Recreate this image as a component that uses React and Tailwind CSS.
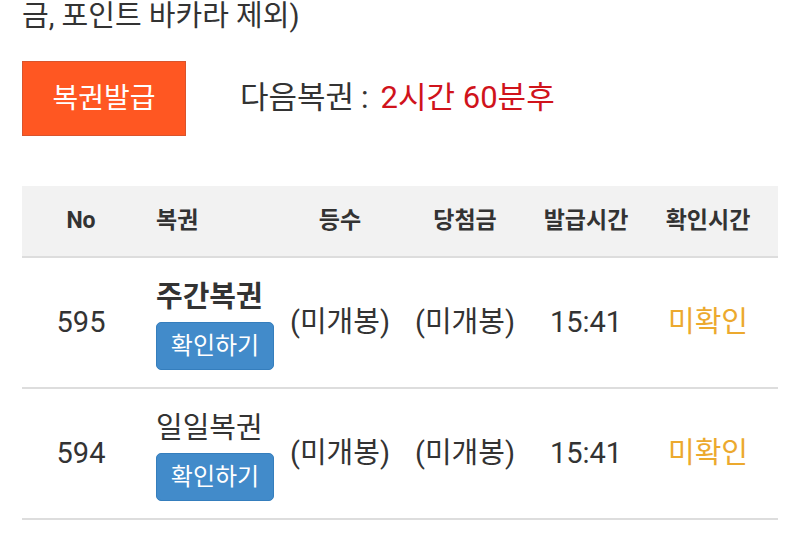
export default function App() {
  const rows = [
    { no: 595, name: "주간복권", bold: true },
    { no: 594, name: "일일복권", bold: false },
  ];

  return (
    <div
      className="bg-white w-[800px] h-[543px] overflow-hidden px-[22px] text-[#333]"
      style={{ fontFamily: 'Roboto, "Noto Sans CJK KR", "Noto Sans", sans-serif' }}
    >
      {/* Notice tail */}
      <div className="text-[29px] leading-[33px]">금, 포인트 바카라 제외)</div>

      {/* Issue row */}
      <div className="flex items-center mt-[28px]">
        <button className="w-[164px] h-[75px] bg-[#ff5722] border border-[#d9542c] text-white text-[28px] flex items-center justify-center">
          복권발급
        </button>
        <div className="ml-[54px] text-[31px] flex items-center">
          <span>다음복권</span>
          <span className="ml-[7px] mr-[12px]">:</span>
          <span className="text-[#d0131b]">2시간 60분후</span>
        </div>
      </div>

      {/* Ticket table */}
      <div className="mt-[50px] w-[756px]">
        <div className="grid grid-cols-[118px_144px_112px_138px_104px_140px] h-[72px] bg-[#f2f2f2] border-b-2 border-[#dddddd] items-center text-[23px] font-bold">
          <div className="text-center">No</div>
          <div className="pl-[16px]">복권</div>
          <div className="text-center">등수</div>
          <div className="text-center">당첨금</div>
          <div className="text-center">발급시간</div>
          <div className="text-center">확인시간</div>
        </div>

        {rows.map((r) => (
          <div
            key={r.no}
            className="grid grid-cols-[118px_144px_112px_138px_104px_140px] h-[131px] border-b-2 border-[#dddddd] items-center text-[29px]"
          >
            <div className="text-center">{r.no}</div>
            <div className="pl-[16px] flex flex-col items-start">
              <div className={r.bold ? "font-bold leading-[34px] mt-[4px]" : "leading-[34px] mt-[4px]"}>{r.name}</div>
              <button className="mt-[8px] w-[118px] h-[48px] rounded-[5px] bg-[#428bca] border border-[#357ebd] text-white text-[24px] flex items-center justify-center">
                확인하기
              </button>
            </div>
            <div className="text-center">(미개봉)</div>
            <div className="text-center">(미개봉)</div>
            <div className="text-center">15:41</div>
            <div className="text-center text-[#eca92e]">미확인</div>
          </div>
        ))}
      </div>
    </div>
  );
}
